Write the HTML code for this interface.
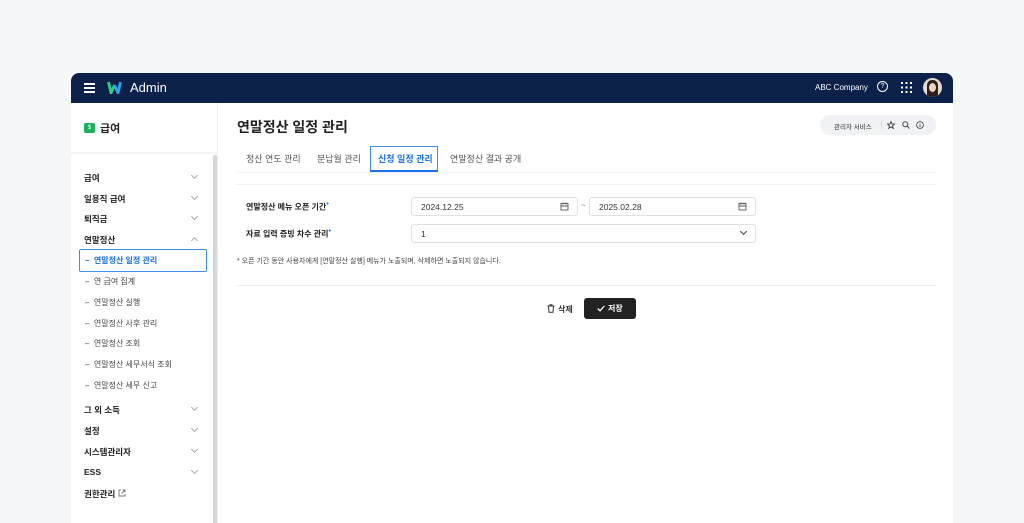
<!DOCTYPE html>
<html><head><meta charset="utf-8"><style>
*{box-sizing:border-box;margin:0;padding:0}
body{width:1024px;height:515px;background:#f6f7f9;font-family:"Liberation Sans","Noto Sans CJK KR",sans-serif;position:relative;overflow:hidden;color:#222}
.card{position:absolute;left:71px;top:73px;width:882px;height:450px;background:#fff;border-radius:8px 8px 0 0;overflow:hidden}
.hd{position:absolute;left:0;top:0;width:882px;height:30px;background:#0b2149;color:#fff}
.abs{position:absolute}
.side{position:absolute;left:0;top:30px;width:147px;height:420px;border-right:1px solid #eceef1}
.mi{position:absolute;left:13px;font-size:8.5px;font-weight:bold;color:#222}
.sub{position:absolute;left:14px;font-size:8px;color:#444}
.chev{position:absolute;left:121px;width:5px;height:5px;border-right:1px solid #aaa;border-bottom:1px solid #aaa;transform:rotate(45deg)}
.tab{position:absolute;top:79px;font-size:9px;color:#555}
.inp{position:absolute;height:19px;border:1px solid #dde0e5;border-radius:3px;font-size:8.5px;color:#333;padding:4px 9px}
.lbl{position:absolute;left:175px;font-size:8px;font-weight:bold;color:#222}
.lbl sup{color:#1a73e8;font-size:7px}
.cal{position:absolute;right:8px;top:4px}
</style></head><body>
<div class="card">
 <div class="hd">
  <div class="abs" style="left:13px;top:10px;width:11px;height:2px;background:#fff;box-shadow:0 4px 0 #fff,0 8px 0 #fff"></div>
  <svg class="abs" style="left:36px;top:8px" width="15" height="13" viewBox="0 0 15 13"><path d="M1.5 1 L4 12 L7.5 4" fill="none" stroke="#2ad27a" stroke-width="2.8" stroke-linejoin="round"/><path d="M7.5 4 L11 12 L13.5 1" fill="none" stroke="#27a7f0" stroke-width="2.8" stroke-linejoin="round"/></svg>
  <div class="abs" style="left:59px;top:7px;font-size:13px">Admin</div>
  <div class="abs" style="left:744px;top:10px;font-size:8px">ABC Company</div>
  <div class="abs" style="left:806px;top:8px;width:11px;height:11px;border:1.2px solid #fff;border-radius:50%;font-size:7px;text-align:center;line-height:9px">?</div>
  <svg class="abs" style="left:830px;top:9px" width="11" height="11"><g fill="#fff"><rect x="0" y="0" width="2" height="2"/><rect x="4.5" y="0" width="2" height="2"/><rect x="9" y="0" width="2" height="2"/><rect x="0" y="4.5" width="2" height="2"/><rect x="4.5" y="4.5" width="2" height="2"/><rect x="9" y="4.5" width="2" height="2"/><rect x="0" y="9" width="2" height="2"/><rect x="4.5" y="9" width="2" height="2"/><rect x="9" y="9" width="2" height="2"/></g></svg>
  <div class="abs" style="left:852px;top:5px;width:19px;height:19px;border-radius:50%;background:#e8d9cc;overflow:hidden"><div style="position:absolute;left:4px;top:2px;width:11px;height:17px;border-radius:5px 5px 2px 2px;background:#2b211c"></div><div style="position:absolute;left:6px;top:5px;width:7px;height:9px;border-radius:50%;background:#f0d5c2"></div></div>
 </div>
 <div class="side">
  <div class="abs" style="left:13px;top:20px;width:11px;height:10px;background:#19b35b;border-radius:2px;color:#fff;font-size:6px;text-align:center;line-height:10px">$</div>
  <div class="abs" style="left:29px;top:17px;font-size:11px;font-weight:bold">급여</div>
  <div class="abs" style="left:0;top:49px;width:147px;height:2px;background:#f2f3f5"></div>
  <div class="abs" style="left:142px;top:52px;width:4px;height:370px;background:#d5d7da;border-radius:2px"></div>
  <div class="mi" style="top:69px">급여</div><div class="chev" style="top:70px"></div>
  <div class="mi" style="top:90px">일용직 급여</div><div class="chev" style="top:91px"></div>
  <div class="mi" style="top:110px">퇴직금</div><div class="chev" style="top:111px"></div>
  <div class="mi" style="top:131px">연말정산</div><div class="chev" style="top:135px;transform:rotate(-135deg)"></div>
  <div class="abs" style="left:8px;top:146px;width:128px;height:23px;border:1px solid #3d8ef0;border-radius:2px"></div>
  <div class="sub" style="top:152px;color:#1a73e8;font-weight:bold">–&nbsp; 연말정산 일정 관리</div>
  <div class="sub" style="top:173px">–&nbsp; 연 급여 집계</div>
  <div class="sub" style="top:194px">–&nbsp; 연말정산 실행</div>
  <div class="sub" style="top:215px">–&nbsp; 연말정산 사후 관리</div>
  <div class="sub" style="top:235px">–&nbsp; 연말정산 조회</div>
  <div class="sub" style="top:256px">–&nbsp; 연말정산 세무서식 조회</div>
  <div class="sub" style="top:277px">–&nbsp; 연말정산 세무 신고</div>
  <div class="mi" style="top:301px">그 외 소득</div><div class="chev" style="top:302px"></div>
  <div class="mi" style="top:322px">설정</div><div class="chev" style="top:323px"></div>
  <div class="mi" style="top:343px">시스템관리자</div><div class="chev" style="top:344px"></div>
  <div class="mi" style="top:364px">ESS</div><div class="chev" style="top:365px"></div>
  <div class="mi" style="top:385px">권한관리</div>
  <svg class="abs" style="left:47px;top:386px" width="8" height="8" viewBox="0 0 8 8"><path d="M3 1H1V7H7V5M4.5 1H7V3.5M7 1L3.5 4.5" fill="none" stroke="#777" stroke-width="0.9"/></svg>
 </div>
 <div class="abs" style="left:166px;top:44px;font-size:14px;font-weight:bold">연말정산 일정 관리</div>
 <div class="abs" style="left:749px;top:42px;width:116px;height:20px;background:#f0f2f5;border-radius:10px;font-size:6.5px;color:#333">
  <span class="abs" style="left:14px;top:6px">관리자 서비스</span>
  <span class="abs" style="left:61px;top:5px;width:1px;height:9px;background:#ddd"></span>
  <svg class="abs" style="left:67px;top:6px" width="8" height="8" viewBox="0 0 8 8"><path d="M4 .5L5 3H7.6L5.5 4.7L6.3 7.4L4 5.8L1.7 7.4L2.5 4.7L.4 3H3Z" fill="none" stroke="#333" stroke-width="0.8"/></svg>
  <svg class="abs" style="left:82px;top:6px" width="8" height="8" viewBox="0 0 8 8"><circle cx="3.3" cy="3.3" r="2.5" fill="none" stroke="#333" stroke-width="0.9"/><path d="M5.2 5.2L7.5 7.5" stroke="#333" stroke-width="0.9"/></svg>
  <svg class="abs" style="left:96px;top:6px" width="8" height="8" viewBox="0 0 8 8"><circle cx="4" cy="4" r="3.4" fill="none" stroke="#333" stroke-width="0.8"/><path d="M4 3.3V6M4 2V2.6" stroke="#333" stroke-width="0.8"/></svg>
 </div>
 <div class="tab" style="left:175px">정산 연도 관리</div>
 <div class="tab" style="left:246px">분납월 관리</div>
 <div class="abs" style="left:299px;top:73px;width:68px;height:24px;border:1px solid #3d8ef0;border-bottom:none"></div>
 <div class="abs" style="left:299px;top:97px;width:68px;height:2px;background:#1a73e8"></div>
 <div class="tab" style="left:307px;color:#1a73e8;font-weight:bold">신청 일정 관리</div>
 <div class="tab" style="left:379px">연말정산 결과 공개</div>
 <div class="abs" style="left:166px;top:99px;width:699px;height:1px;background:#f0f1f3"></div>
 <div class="abs" style="left:166px;top:111px;width:699px;height:1px;background:#eceef1"></div>
 <div class="lbl" style="top:128px">연말정산 메뉴 오픈 기간<sup>•</sup></div>
 <div class="inp" style="left:340px;top:124px;width:167px">2024.12.25<svg class="cal" width="9" height="9" viewBox="0 0 9 9"><rect x="1" y="1.5" width="7" height="6.5" fill="none" stroke="#555" stroke-width="0.9"/><path d="M1 4H8M3 .5V2.5M6 .5V2.5" stroke="#555" stroke-width="0.9"/></svg></div>
 <div class="abs" style="left:510px;top:128px;font-size:8px;color:#666">~</div>
 <div class="inp" style="left:518px;top:124px;width:167px">2025.02.28<svg class="cal" width="9" height="9" viewBox="0 0 9 9"><rect x="1" y="1.5" width="7" height="6.5" fill="none" stroke="#555" stroke-width="0.9"/><path d="M1 4H8M3 .5V2.5M6 .5V2.5" stroke="#555" stroke-width="0.9"/></svg></div>
 <div class="lbl" style="top:155px">자료 입력 증빙 차수 관리<sup>•</sup></div>
 <div class="inp" style="left:340px;top:151px;width:345px">1<span style="position:absolute;right:9px;top:4px;width:5px;height:5px;border-right:1.2px solid #444;border-bottom:1.2px solid #444;transform:rotate(45deg)"></span></div>
 <div class="abs" style="left:166px;top:183px;font-size:7px;color:#444">* 오픈 기간 동안 사용자에게 [연말정산 실행] 메뉴가 노출되며, 삭제하면 노출되지 않습니다.</div>
 <div class="abs" style="left:166px;top:212px;width:699px;height:1px;background:#eceef1"></div>
 <svg class="abs" style="left:476px;top:231px" width="8" height="9" viewBox="0 0 8 9"><path d="M.5 2H7.5M3 2V.8H5V2M1.5 2L2 8.3H6L6.5 2" fill="none" stroke="#333" stroke-width="1"/></svg>
 <div class="abs" style="left:487px;top:231px;font-size:8px;font-weight:bold;color:#333">삭제</div>
 <div class="abs" style="left:513px;top:225px;width:52px;height:21px;background:#222;border-radius:3px;color:#fff;font-size:8px;font-weight:bold;line-height:21px"><svg class="abs" style="left:13px;top:7px" width="8" height="7" viewBox="0 0 8 7"><path d="M.7 3.5L3 5.8L7.3 1" fill="none" stroke="#fff" stroke-width="1.3"/></svg><span class="abs" style="left:24px;top:0">저장</span></div>
</div>
</body></html>
